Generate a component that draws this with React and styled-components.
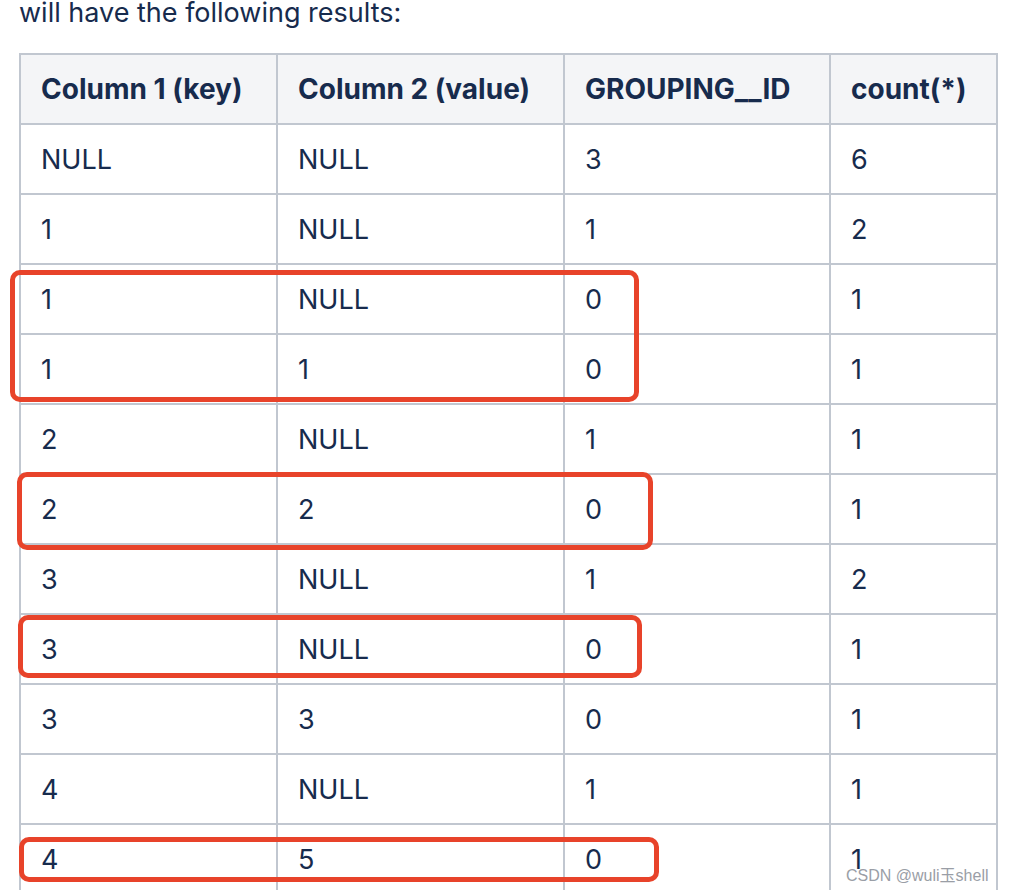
import React from 'react';
import styled, { createGlobalStyle } from 'styled-components';

const GlobalStyle = createGlobalStyle`
  html, body {
    margin: 0;
    padding: 0;
    background: #ffffff;
    overflow: hidden;
  }
  body {
    font-family: Inter, "Noto Sans", "Liberation Sans", sans-serif;
    color: #172b4d;
  }
`;

const Page = styled.div`
  position: relative;
  width: 1010px;
  height: 890px;
  overflow: hidden;
  padding-left: 19px;
  box-sizing: border-box;
`;

const Lead = styled.p`
  margin: -3px 0 0;
  font-size: 27px;
  line-height: 32px;
  color: #172b4d;
`;

const Table = styled.table`
  margin-top: 24px;
  width: 977px;
  table-layout: fixed;
  border-collapse: collapse;
  font-size: 27px;
  color: #172b4d;
`;

const Th = styled.th`
  height: 70px;
  padding: 0 0 0 20px;
  text-align: left;
  font-size: 28px;
  font-weight: 700;
  background: #f4f5f7;
  border: 2px solid #c1c7d0;
  box-sizing: border-box;
`;

const Td = styled.td`
  height: 70px;
  padding: 0 0 0 20px;
  text-align: left;
  font-weight: 400;
  border: 2px solid #c1c7d0;
  box-sizing: border-box;
`;

const Highlight = styled.div`
  position: absolute;
  left: ${(p) => p.$x}px;
  top: ${(p) => p.$y}px;
  width: ${(p) => p.$w}px;
  height: ${(p) => p.$h}px;
  border: 5px solid #e8432a;
  border-radius: 10px;
  box-sizing: border-box;
  pointer-events: none;
`;

const Watermark = styled.span`
  position: absolute;
  left: 846px;
  top: 862px;
  font-family: "Liberation Sans", Arial, "Noto Sans CJK SC", sans-serif;
  font-size: 16px;
  color: #9a9ea6;
  white-space: nowrap;
`;

const columns = [
  { title: 'Column 1 (key)', width: 257 },
  { title: 'Column 2 (value)', width: 287 },
  { title: 'GROUPING__ID', width: 266 },
  { title: 'count(*)', width: 167 },
];

const rows = [
  ['NULL', 'NULL', '3', '6'],
  ['1', 'NULL', '1', '2'],
  ['1', 'NULL', '0', '1'],
  ['1', '1', '0', '1'],
  ['2', 'NULL', '1', '1'],
  ['2', '2', '0', '1'],
  ['3', 'NULL', '1', '2'],
  ['3', 'NULL', '0', '1'],
  ['3', '3', '0', '1'],
  ['4', 'NULL', '1', '1'],
  ['4', '5', '0', '1'],
];

const highlights = [
  { x: 10, y: 270, w: 629, h: 132 },
  { x: 17, y: 472, w: 636, h: 78 },
  { x: 18, y: 615, w: 624, h: 63 },
  { x: 19, y: 837, w: 640, h: 45 },
];

function App() {
  return (
    <Page>
      <GlobalStyle />
      <Lead>will have the following results:</Lead>
      <Table>
        <colgroup>
          {columns.map((c) => (
            <col key={c.title} style={{ width: c.width }} />
          ))}
        </colgroup>
        <thead>
          <tr>
            {columns.map((c) => (
              <Th key={c.title}>{c.title}</Th>
            ))}
          </tr>
        </thead>
        <tbody>
          {rows.map((r, i) => (
            <tr key={i}>
              {r.map((v, j) => (
                <Td key={j}>{v}</Td>
              ))}
            </tr>
          ))}
        </tbody>
      </Table>
      {highlights.map((h, i) => (
        <Highlight key={i} $x={h.x} $y={h.y} $w={h.w} $h={h.h} />
      ))}
      <Watermark>CSDN @wuli玉shell</Watermark>
    </Page>
  );
}

export default App;
